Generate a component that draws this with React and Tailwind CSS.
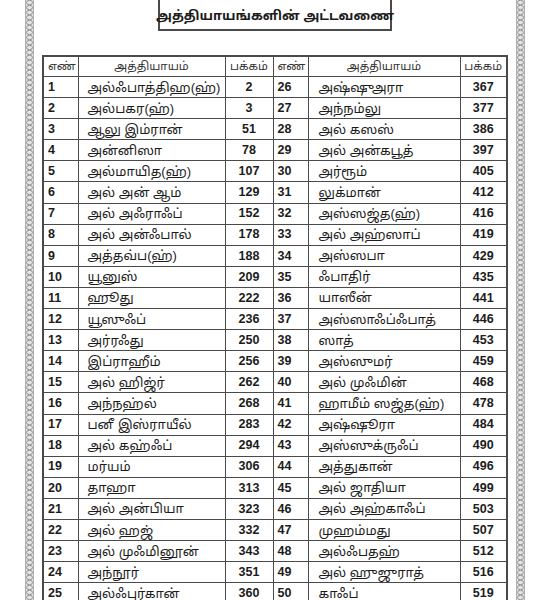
const left = [
  [1, "அல்ஃபாத்திஹ(ஹ்)", 2],
  [2, "அல்பகர(ஹ்)", 3],
  [3, "ஆலு இம்ரான்", 51],
  [4, "அன்னிஸா", 78],
  [5, "அல்மாயித(ஹ்)", 107],
  [6, "அல் அன் ஆம்", 129],
  [7, "அல் அஃராஃப்", 152],
  [8, "அல் அன்ஃபால்", 178],
  [9, "அத்தவ்ப(ஹ்)", 188],
  [10, "யூனுஸ்", 209],
  [11, "ஹூது", 222],
  [12, "யூஸுஃப்", 236],
  [13, "அர்ரஃது", 250],
  [14, "இப்ராஹீம்", 256],
  [15, "அல் ஹிஜ்ர்", 262],
  [16, "அந்நஹ்ல்", 268],
  [17, "பனீ இஸ்ராயீல்", 283],
  [18, "அல் கஹ்ஃப்", 294],
  [19, "மர்யம்", 306],
  [20, "தாஹா", 313],
  [21, "அல் அன்பியா", 323],
  [22, "அல் ஹஜ்", 332],
  [23, "அல் முஃமினூன்", 343],
  [24, "அந்நூர்", 351],
  [25, "அல்ஃபுர்கான்", 360],
]

const right = [
  [26, "அஷ்ஷுஅரா", 367],
  [27, "அந்நம்லு", 377],
  [28, "அல் கஸஸ்", 386],
  [29, "அல் அன்கபூத்", 397],
  [30, "அர்ரூம்", 405],
  [31, "லுக்மான்", 412],
  [32, "அஸ்ஸஜ்த(ஹ்)", 416],
  [33, "அல் அஹ்ஸாப்", 419],
  [34, "அஸ்ஸபா", 429],
  [35, "ஃபாதிர்", 435],
  [36, "யாஸீன்", 441],
  [37, "அஸ்ஸாஃப்ஃபாத்", 446],
  [38, "ஸாத்", 453],
  [39, "அஸ்ஸுமர்", 459],
  [40, "அல் முஃமின்", 468],
  [41, "ஹாமீம் ஸஜ்த(ஹ்)", 478],
  [42, "அஷ்ஷூரா", 484],
  [43, "அஸ்ஸுக்ருஃப்", 490],
  [44, "அத்துகான்", 496],
  [45, "அல் ஜாதியா", 499],
  [46, "அல் அஹ்காஃப்", 503],
  [47, "முஹம்மது", 507],
  [48, "அல்ஃபதஹ்", 512],
  [49, "அல் ஹுஜுராத்", 516],
  [50, "காஃப்", 519],
]

function Chain() {
  return (
    <svg width="9" height="600" className="block shrink-0">
      <defs>
        <pattern id="chain" width="9" height="5" patternUnits="userSpaceOnUse">
          <rect width="9" height="5" fill="#e4e4e4" />
          <ellipse cx="4.5" cy="2.5" rx="3" ry="2.2" fill="none" stroke="#8a8a8a" strokeWidth="0.9" />
        </pattern>
      </defs>
      <rect width="9" height="600" fill="url(#chain)" />
      <line x1="0.5" y1="0" x2="0.5" y2="600" stroke="#b0b0b0" />
      <line x1="8.5" y1="0" x2="8.5" y2="600" stroke="#b0b0b0" />
    </svg>
  )
}

const cell = "border border-[#4a4a4a] align-middle"

function App() {
  return (
    <div className="w-[547px] h-[600px] overflow-hidden bg-white flex font-['Liberation_Sans','Noto_Sans_Tamil',sans-serif] text-[#1c1c1c]">
      <div className="w-[25px] shrink-0" />
      <Chain />
      <div className="flex-1 flex flex-col items-center">
        <div className="mt-[-3px] w-[234px] h-[34px] shrink-0 border-2 border-[#4a4a4a] flex items-center justify-center">
          <h1 className="text-[13px] font-bold leading-none pt-[2px] whitespace-nowrap">அத்தியாயங்களின் அட்டவணை</h1>
        </div>
        <table className="mt-[24px] border-collapse table-fixed w-[464px] border-2 border-[#4a4a4a]">
          <colgroup>
            <col className="w-[35px]" />
            <col className="w-[147px]" />
            <col className="w-[48px]" />
            <col className="w-[35px]" />
            <col className="w-[152px]" />
            <col className="w-[47px]" />
          </colgroup>
          <thead>
            <tr className="h-[20.5px] text-[11.5px] leading-none text-[#333]">
              <th className={cell + " font-normal text-left pl-1"}>எண்</th>
              <th className={cell + " font-normal"}>அத்தியாயம்</th>
              <th className={cell + " font-normal"}>பக்கம்</th>
              <th className={cell + " font-normal text-left pl-1"}>எண்</th>
              <th className={cell + " font-normal"}>அத்தியாயம்</th>
              <th className={cell + " font-normal"}>பக்கம்</th>
            </tr>
          </thead>
          <tbody>
            {left.map((row, i) => (
              <tr key={row[0]} className="h-[21.1px] leading-none">
                <td className={cell + " pl-1 text-[12.5px] font-bold"}>{row[0]}</td>
                <td className={cell + " pl-[9px] text-[13px]"}>{row[1]}</td>
                <td className={cell + " text-center text-[12.5px] font-bold"}>{row[2]}</td>
                <td className={cell + " pl-1 text-[12.5px] font-bold"}>{right[i][0]}</td>
                <td className={cell + " pl-[10px] text-[13px]"}>{right[i][1]}</td>
                <td className={cell + " text-center text-[12.5px] font-bold"}>{right[i][2]}</td>
              </tr>
            ))}
          </tbody>
        </table>
      </div>
      <Chain />
      <div className="w-[22px] shrink-0" />
    </div>
  )
}

export default App
